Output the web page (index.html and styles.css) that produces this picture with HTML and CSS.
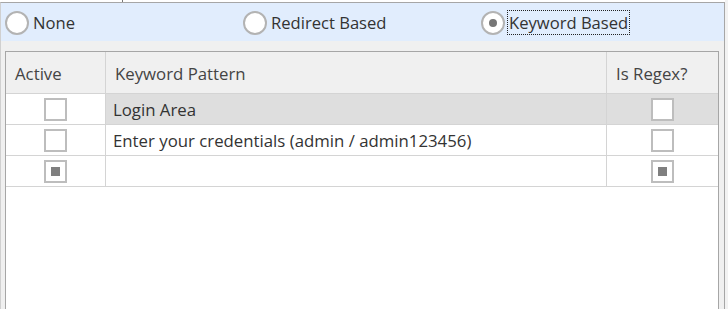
FILE: index.html
```html
<!DOCTYPE html>
<html lang="en">
<head>
  <meta charset="UTF-8">
  <title>Keyword Filter</title>
  <link rel="stylesheet" href="styles.css">
</head>
<body>
  <div class="top-strip"><span class="tick"></span></div>

  <div class="panel">
    <div class="mode-bar">
      <label class="mode">
        <span class="radio"></span>
        <span class="mode-text">None</span>
      </label>
      <label class="mode">
        <span class="radio"></span>
        <span class="mode-text">Redirect Based</span>
      </label>
      <label class="mode">
        <span class="radio checked"></span>
        <span class="mode-text focused">Keyword Based</span>
      </label>
    </div>

    <div class="grid-area">
      <div class="grid">
        <div class="cell head">Active</div>
        <div class="cell head">Keyword Pattern</div>
        <div class="cell head last">Is Regex?</div>

        <div class="cell center"><span class="check"></span></div>
        <div class="cell text selected">Login Area</div>
        <div class="cell center last selected"><span class="check"></span></div>

        <div class="cell center"><span class="check"></span></div>
        <div class="cell text">Enter your credentials (admin / admin123456)</div>
        <div class="cell center last"><span class="check"></span></div>

        <div class="cell center"><span class="check mixed"></span></div>
        <div class="cell text"></div>
        <div class="cell center last"><span class="check mixed"></span></div>
      </div>
    </div>
  </div>
</body>
</html>
```

FILE: styles.css
```css
body {
  margin: 0;
  background: #f2f2f2;
  font-family: "Open Sans", "Noto Sans", sans-serif;
  color: #333;
  overflow: hidden;
}

.top-strip {
  height: 2px;
  width: 725px;
  background: #fff;
}

.tick {
  display: block;
  margin-left: 122px;
  width: 1px;
  height: 2px;
  background: #777;
}

.panel {
  width: 723px;
  height: 307px;
  border-top: 1px solid #a6a6a6;
  border-right: 1px solid #a6a6a6;
  border-left: 1px solid #d0d0d0;
  background: #f0f0f0;
  display: flex;
  flex-direction: column;
}

.mode-bar {
  height: 38px;
  background: #e1edfd;
  padding-left: 4px;
  display: grid;
  grid-template-columns: 238px 238px 238px;
  align-items: center;
}

.mode {
  display: flex;
  align-items: center;
  gap: 2px;
  font-size: 16.6px;
}

.radio {
  width: 20px;
  height: 20px;
  border: 2px solid #b3b3b3;
  border-radius: 50%;
  background: #fff;
  display: flex;
  align-items: center;
  justify-content: center;
  margin-top: 1px;
}

.radio.checked::after {
  content: "";
  width: 8px;
  height: 8px;
  border-radius: 50%;
  background: #767676;
}

.mode-text {
  padding: 1px 1px 0;
  line-height: 22px;
  border: 1px solid transparent;
}

.mode-text.focused {
  border: 1px dotted #222;
}

.grid-area {
  flex: 1;
  padding: 10px 5px 0 4px;
  display: flex;
}

.grid {
  flex: 1;
  background: #fff;
  border: 1px solid #a6a6a6;
  border-bottom: none;
  display: grid;
  grid-template-columns: 100px 501px 1fr;
  grid-template-rows: 42px 31px 31px 31px;
  align-content: start;
}

.cell {
  box-sizing: border-box;
  border-right: 1px solid #d4d4d4;
  border-bottom: 1px solid #d4d4d4;
  display: flex;
  align-items: center;
  font-size: 16.8px;
}

.cell.last {
  border-right: none;
}

.head {
  background: #f0f0f0;
  color: #444;
  padding-left: 9px;
  padding-top: 1px;
}

.text {
  padding-left: 7px;
  padding-top: 1px;
}

.center {
  justify-content: center;
}

.selected {
  background: #dedede;
}

.check {
  box-sizing: border-box;
  width: 23px;
  height: 23px;
  border: 2px solid #bdbdbd;
  background: #fff;
  display: flex;
  align-items: center;
  justify-content: center;
}

.check.mixed::after {
  content: "";
  width: 9px;
  height: 9px;
  background: #7f7f7f;
}
```
